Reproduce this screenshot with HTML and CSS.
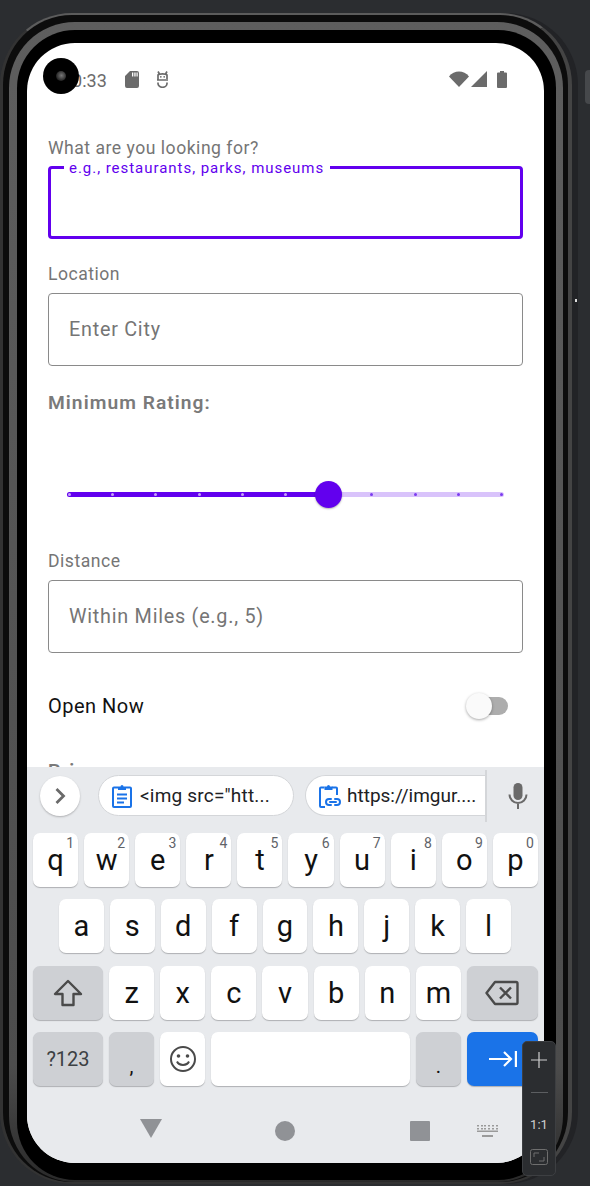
FILE: index.html
```html
<!DOCTYPE html>
<html lang="en">
<head>
  <meta charset="UTF-8">
  <meta name="viewport" content="width=device-width, initial-scale=1.0">
  <title>Search Form</title>
  <link rel="stylesheet" href="styles.css">
</head>
<body>

  <div class="side-button"></div>
  <div class="side-dot"></div>

  <div class="phone">
    <div class="band">
      <div class="bezel">
        <div class="screen">
          <div class="camera"><span class="lens"></span></div>

          <div class="status-bar">
            <span class="time">10:33</span>
            <svg class="icon-sd" width="14" height="17" viewBox="0 0 14 17"><path fill="#6b6b6b" d="M5 0h7a2 2 0 0 1 2 2v13a2 2 0 0 1-2 2H2a2 2 0 0 1-2-2V5zM7 1.500v4h1.300v-4zM9.300 1.500v4h1.300v-4zM11.500 1.500v4h1.200v-4z"/></svg>
            <svg class="icon-bug" width="13" height="17" viewBox="0 0 13 17"><path fill="none" stroke="#6b6b6b" stroke-width="1.700" d="M2 9V4c1-1.500 8-1.500 9 0v4M1 9h11M11 11.500v1a4.500 3.800 0 0 1-9 0v-1M2 .5l1.500 2.500M11 .5L9.500 3"/><circle cx="4.800" cy="5.800" r=".9" fill="#6b6b6b"/><circle cx="8.200" cy="5.800" r=".9" fill="#6b6b6b"/></svg>
            <span class="spacer"></span>
            <svg width="20" height="16" viewBox="0 0 20 16"><path fill="#6b6b6b" d="M0 5.500C5-1.200 15-1.200 20 5.500L10 16z"/></svg>
            <svg class="icon-signal" width="16" height="16" viewBox="0 0 16 16"><path fill="#6b6b6b" d="M16 0v16H0z"/></svg>
            <svg class="icon-battery" width="10" height="17" viewBox="0 0 10 17"><path fill="#6b6b6b" d="M3 0h4v1.500h2a1 1 0 0 1 1 1V16a1 1 0 0 1-1 1H1a1 1 0 0 1-1-1V2.500a1 1 0 0 1 1-1h2z"/></svg>
          </div>

          <div class="form">
            <div class="label first">What are you looking for?</div>
            <div class="field focused">
              <span class="float-label">e.g., restaurants, parks, museums</span>
            </div>

            <div class="label gap-top">Location</div>
            <div class="field"><span class="placeholder">Enter City</span></div>

            <div class="label-bold">Minimum Rating:</div>
            <div class="slider">
              <div class="track"><div class="track-fill"></div></div>
              <div class="ticks">
                <span class="tick"></span><span class="tick"></span><span class="tick"></span>
                <span class="tick"></span><span class="tick"></span><span class="tick"></span>
                <span class="tick hidden"></span>
                <span class="tick off"></span><span class="tick off"></span><span class="tick off"></span><span class="tick off"></span>
              </div>
              <div class="thumb"></div>
            </div>

            <div class="label">Distance</div>
            <div class="field"><span class="placeholder">Within Miles (e.g., 5)</span></div>

            <div class="switch-row">
              <span>Open Now</span>
              <div class="switch"><div class="switch-track"></div><div class="switch-thumb"></div></div>
            </div>

            <div class="label-bold price">Price</div>
          </div>

          <div class="keyboard">
            <div class="suggestions">
              <div class="chevron">
                <svg width="12" height="18" viewBox="0 0 12 18"><path fill="none" stroke="#6a6a6a" stroke-width="2.800" d="M2.500 2l7 7-7 7"/></svg>
              </div>
              <div class="chip">
                <svg width="20" height="24" viewBox="0 0 20 24"><path fill="none" stroke="#1a73e8" stroke-width="2" d="M6 3.500H2a1 1 0 0 0-1 1V22a1 1 0 0 0 1 1h16a1 1 0 0 0 1-1V4.500a1 1 0 0 0-1-1h-4"/><path fill="#1a73e8" d="M6 2.500h2.500a1.500 1.500 0 0 1 3 0H14V6H6zM5 9.500h10v2H5zM5 13.500h10v2H5zM5 17.500h7v2H5z"/></svg>
                <span>&lt;img src="htt...</span>
              </div>
              <div class="chip chip-cut">
                <svg width="22" height="24" viewBox="0 0 22 24"><path fill="none" stroke="#1a73e8" stroke-width="2" d="M5.500 3.500H2a1 1 0 0 0-1 1V22a1 1 0 0 0 1 1h4M13 3.500h4a1 1 0 0 1 1 1V11"/><path fill="#1a73e8" d="M5.500 2.500H8a1.500 1.500 0 0 1 3 0h2.500V6h-8z"/><path fill="none" stroke="#1a73e8" stroke-width="2" stroke-linecap="round" d="M12 15h-2a3 3 0 0 0 0 6h2M16 15h2a3 3 0 0 1 0 6h-2M11 18h6"/></svg>
                <span>https://imgur....</span>
              </div>
              <div class="mic">
                <svg width="20" height="26" viewBox="0 0 20 26"><rect x="5.500" y="0" width="9" height="17" rx="4.500" fill="#6a6a6a"/><path fill="none" stroke="#6a6a6a" stroke-width="2" d="M1.500 11.500a8.500 8.500 0 0 0 17 0M10 20v6"/></svg>
              </div>
            </div>

            <div class="key-row">
              <div class="key">q<sup>1</sup></div><div class="key">w<sup>2</sup></div><div class="key">e<sup>3</sup></div>
              <div class="key">r<sup>4</sup></div><div class="key">t<sup>5</sup></div><div class="key">y<sup>6</sup></div>
              <div class="key">u<sup>7</sup></div><div class="key">i<sup>8</sup></div><div class="key">o<sup>9</sup></div>
              <div class="key">p<sup>0</sup></div>
            </div>
            <div class="key-row indent">
              <div class="key">a</div><div class="key">s</div><div class="key">d</div><div class="key">f</div><div class="key">g</div>
              <div class="key">h</div><div class="key">j</div><div class="key">k</div><div class="key">l</div>
            </div>
            <div class="key-row">
              <div class="key wide gray">
                <svg width="30" height="28" viewBox="0 0 30 28"><path fill="none" stroke="#4a4a4a" stroke-width="2.400" stroke-linejoin="round" d="M15 2L2 15h7.500v11h11V15H28z"/></svg>
              </div>
              <div class="key">z</div><div class="key">x</div><div class="key">c</div><div class="key">v</div>
              <div class="key">b</div><div class="key">n</div><div class="key">m</div>
              <div class="key wide gray">
                <svg width="34" height="26" viewBox="0 0 34 26"><path fill="none" stroke="#4a4a4a" stroke-width="2.400" stroke-linejoin="round" d="M10 2h21a1.500 1.500 0 0 1 1.500 1.500v19A1.500 1.500 0 0 1 31 24H10L1.500 13z"/><path fill="none" stroke="#4a4a4a" stroke-width="2.400" d="M15 7.500l11 11M26 7.500l-11 11"/></svg>
              </div>
            </div>
            <div class="key-row">
              <div class="key wide gray small-text">?123</div>
              <div class="key gray punct">,</div>
              <div class="key">
                <svg width="28" height="28" viewBox="0 0 28 28"><circle cx="14" cy="14" r="12" fill="none" stroke="#4a4a4a" stroke-width="2"/><circle cx="9.500" cy="11" r="1.800" fill="#4a4a4a"/><circle cx="18.500" cy="11" r="1.800" fill="#4a4a4a"/><path fill="none" stroke="#4a4a4a" stroke-width="2" d="M8 16.500c2 4.500 10 4.500 12 0"/></svg>
              </div>
              <div class="key space"></div>
              <div class="key gray punct">.</div>
              <div class="key wide blue">
                <svg width="28" height="18" viewBox="0 0 28 18"><path fill="none" stroke="#fff" stroke-width="2.200" d="M0 9h22M15 2l7 7-7 7"/><path fill="none" stroke="#fff" stroke-width="2.400" d="M27 1v16"/></svg>
              </div>
            </div>

            <div class="nav-bar">
              <div class="nav-slot"><span class="nav-back"></span></div>
              <div class="nav-slot"><span class="nav-home"></span></div>
              <div class="nav-slot"><span class="nav-recent"></span></div>
              <svg class="nav-kb" width="21" height="12" viewBox="0 0 21 12"><path fill="#9a9a9a" d="M0 0h2v1.500H0zM4 0h2v1.500H4zM7 0h2v1.500H7zM11 0h2v1.500h-2zM15 0h2v1.500h-2zM19 0h2v1.500h-2zM0 3h2v1.500H0zM4 3h2v1.500H4zM7 3h2v1.500H7zM11 3h2v1.500h-2zM15 3h2v1.500h-2zM19 3h2v1.500h-2zM0 5.500h21V7H0zM5 10h11v2H5z"/></svg>
            </div>
          </div>
        </div>
      </div>
    </div>
  </div>

  <div class="zoom-tool">
    <svg width="18" height="18" viewBox="0 0 18 18"><path fill="none" stroke="#d0d0d0" stroke-width="1.200" d="M9 1v16M1 9h16"/></svg>
    <span class="zoom-minus"></span>
    <span class="zoom-label">1:1</span>
    <svg width="18" height="16" viewBox="0 0 18 16"><rect x=".5" y=".5" width="17" height="15" rx="2" fill="none" stroke="#6e6e6e"/><path fill="none" stroke="#6e6e6e" d="M4 8V4h5M14 8v4H9"/></svg>
  </div>

</body>
</html>
```

FILE: styles.css
```css
* {
  box-sizing: border-box;
}
body {
  margin: 0;
  width: 590px;
  height: 1186px;
  overflow: hidden;
  padding-top: 13px;
  background: #2b2d30;
  font-family: Roboto, "Liberation Sans", sans-serif;
  position: relative;
}
.side-button {
  position: absolute;
  left: 585px;
  top: 70px;
  width: 8px;
  height: 34px;
  border-radius: 4px;
  background: #46484b;
}
.side-dot {
  position: absolute;
  left: 575px;
  top: 299px;
  width: 2px;
  height: 3px;
  background: #ddd;
}

/* device shell */
.phone {
  width: 572px;
  height: 1171px;
  padding: 7px 5px 0 6px;
  border-style: solid;
  border-width: 2px 4px 2px 3px;
  border-color: #5c5c5c #444 #333 #333;
  border-radius: 72px;
  background: #0c0c0c;
  box-shadow: 6px 0 0 #222326;
}
.band {
  height: 100%;
  padding: 8px 7px 2px 8px;
  border-radius: 66px;
  background: linear-gradient(#5e5e5e, #4c4c4c 90%, #2a2a2a);
}
.bezel {
  height: 100%;
  padding: 13px 12px 17px 10px;
  border-radius: 58px;
  background: #000;
}
.screen {
  position: relative;
  width: 517px;
  height: 1120px;
  display: flex;
  flex-direction: column;
  overflow: hidden;
  border-radius: 48px;
  background: #fff;
}
.camera {
  position: absolute;
  left: 16px;
  top: 15px;
  width: 36px;
  height: 36px;
  display: flex;
  align-items: center;
  justify-content: center;
  border-radius: 50%;
  background: #000;
}
.lens {
  width: 10px;
  height: 10px;
  border-radius: 50%;
  background: radial-gradient(circle at 55% 45%, #777, #222 70%);
}

/* status bar */
.status-bar {
  height: 93px;
  flex-shrink: 0;
  display: flex;
  align-items: flex-start;
  padding: 28px 37px 0 35px;
}
.time {
  font-size: 18px;
  line-height: 19px;
  color: #6b6b6b;
}
.icon-sd {
  margin-left: 18px;
}
.icon-bug {
  margin-left: 17px;
}
.spacer {
  flex: 1;
}
.icon-signal {
  margin-left: 2px;
}
.icon-battery {
  margin-left: 10px;
}

/* form */
.form {
  flex: 1;
  min-height: 0;
  overflow: hidden;
  padding: 0 21px;
}
.label {
  font-size: 17.6px;
  line-height: 22px;
  letter-spacing: .5px;
  color: #757575;
  margin-bottom: 8px;
}
.label.first {
  padding-top: 1px;
  margin-bottom: 7px;
}
.gap-top {
  margin-top: 24px;
}
.field {
  position: relative;
  height: 73px;
  display: flex;
  align-items: center;
  padding-left: 20px;
  border: 1px solid #8a8a8a;
  border-radius: 4px;
}
.field.focused {
  border: 3px solid #6200ee;
}
.float-label {
  position: absolute;
  left: 13px;
  top: -11px;
  padding: 0 6px 0 5px;
  background: #fff;
  font-size: 15px;
  line-height: 20px;
  letter-spacing: .96px;
  color: #6200ee;
}
.placeholder {
  font-size: 19.8px;
  letter-spacing: .75px;
  color: #757575;
}
.label-bold {
  margin-top: 26px;
  font-size: 19.2px;
  font-weight: 600;
  line-height: 22px;
  letter-spacing: 1.05px;
  color: #7a7a7a;
}
.slider {
  position: relative;
  height: 27px;
  margin: 67px 19px 42px;
  display: flex;
  align-items: center;
}
.track {
  width: 100%;
  height: 5px;
  border-radius: 3px;
  background: #d9c3fb;
}
.track-fill {
  width: 60%;
  height: 100%;
  border-radius: 3px;
  background: #6200ee;
}
.ticks {
  position: absolute;
  left: 1px;
  right: 1px;
  top: 12px;
  display: flex;
  justify-content: space-between;
}
.tick {
  width: 3px;
  height: 3px;
  border-radius: 50%;
  background: #c6a4f8;
}
.tick.off {
  background: #7c3bf0;
}
.tick.hidden {
  visibility: hidden;
}
.thumb {
  position: absolute;
  left: 59.9%;
  top: 0;
  width: 27px;
  height: 27px;
  margin-left: -13.5px;
  border-radius: 50%;
  background: #6200ee;
  box-shadow: 0 1px 2px rgba(0, 0, 0, 0.3);
}
.switch-row {
  height: 50px;
  margin-top: 28px;
  display: flex;
  align-items: center;
  justify-content: space-between;
  font-size: 20px;
  letter-spacing: .5px;
  color: #111;
}
.switch {
  position: relative;
  width: 42px;
  height: 28px;
  margin-right: 15px;
  display: flex;
  align-items: center;
  justify-content: flex-end;
}
.switch-track {
  width: 34px;
  height: 18px;
  border-radius: 9px;
  background: #adadad;
}
.switch-thumb {
  position: absolute;
  left: 0;
  top: 1px;
  width: 26px;
  height: 26px;
  border-radius: 50%;
  background: #fafafa;
  box-shadow: 0 1px 3px rgba(0, 0, 0, 0.35);
}
.price {
  margin-top: 29px;
}

/* keyboard */
.keyboard {
  height: 396px;
  flex-shrink: 0;
  padding: 0 6px;
  background: #e8eaed;
}
.suggestions {
  height: 66px;
  display: flex;
  align-items: center;
  padding: 0 0 9px 7px;
}
.chevron {
  width: 40px;
  height: 40px;
  margin-right: 18px;
  display: flex;
  align-items: center;
  justify-content: center;
  border-radius: 50%;
  background: #fff;
  box-shadow: 0 1px 2px rgba(0, 0, 0, 0.25);
}
.chip {
  width: 196px;
  height: 41px;
  flex-shrink: 0;
  display: flex;
  align-items: center;
  gap: 8px;
  padding-left: 13px;
  border: 1px solid #d4d6d9;
  border-radius: 21px;
  background: #fff;
  font-size: 19px;
  letter-spacing: .2px;
  color: #202124;
}
.chip-cut {
  width: 180px;
  margin-left: 11px;
  gap: 6px;
  border-right: 0;
  border-radius: 21px 0 0 21px;
  letter-spacing: 0;
}
.mic {
  flex: 1;
  height: 52px;
  margin-right: -6px;
  padding-left: 4px;
  display: flex;
  align-items: center;
  justify-content: center;
  border-left: 2px solid #d4d6d9;
}
.key-row {
  display: flex;
  gap: 6px;
  height: 54px;
  margin-bottom: 12.4px;
}
.key-row.indent {
  padding: 0 27px 0 26px;
}
.key {
  position: relative;
  flex: 1 1 0;
  display: flex;
  align-items: center;
  justify-content: center;
  border-radius: 7px;
  background: #fff;
  box-shadow: 0 1px 1px #aeb0b3;
  font-size: 29px;
  color: #111;
}
.key sup {
  position: absolute;
  right: 4px;
  top: 3px;
  font-size: 14px;
  line-height: 15px;
  color: #5f6368;
}
.key.wide {
  flex: 0 0 70px;
}
.key.wide:last-child {
  flex: 0 0 71px;
}
.key.space {
  flex: 0 0 199px;
}
.key.gray {
  background: #ced0d4;
}
.key.blue {
  background: #1a73e8;
}
.small-text {
  font-size: 20px;
  color: #3c4043;
}
.punct {
  align-items: flex-end;
  padding-bottom: 8px;
  font-size: 20px;
}

/* nav bar */
.nav-bar {
  height: 64px;
  padding-left: 50.5px;
  display: flex;
  align-items: center;
}
.nav-slot {
  width: 134.5px;
  display: flex;
  justify-content: center;
}
.nav-back {
  width: 0;
  height: 0;
  margin-bottom: 4px;
  border-left: 11px solid transparent;
  border-right: 11px solid transparent;
  border-top: 19px solid #909296;
}
.nav-home {
  width: 20px;
  height: 20px;
  border-radius: 50%;
  background: #909296;
}
.nav-recent {
  width: 20px;
  height: 20px;
  border-radius: 1px;
  background: #909296;
}
.nav-kb {
  margin-left: -10px;
}

/* emulator zoom control */
.zoom-tool {
  position: absolute;
  left: 522px;
  top: 1041px;
  width: 34px;
  height: 135px;
  display: flex;
  flex-direction: column;
  align-items: center;
  padding-top: 9px;
  border: 1px solid #3d3f42;
  border-radius: 5px;
  background: #2b2d30;
}
.zoom-minus {
  width: 17px;
  height: 1px;
  margin-top: 23px;
  background: #5c5e61;
}
.zoom-label {
  margin: 24px 0 16px;
  font-size: 13px;
  line-height: 16px;
  color: #d0d0d0;
}
```
